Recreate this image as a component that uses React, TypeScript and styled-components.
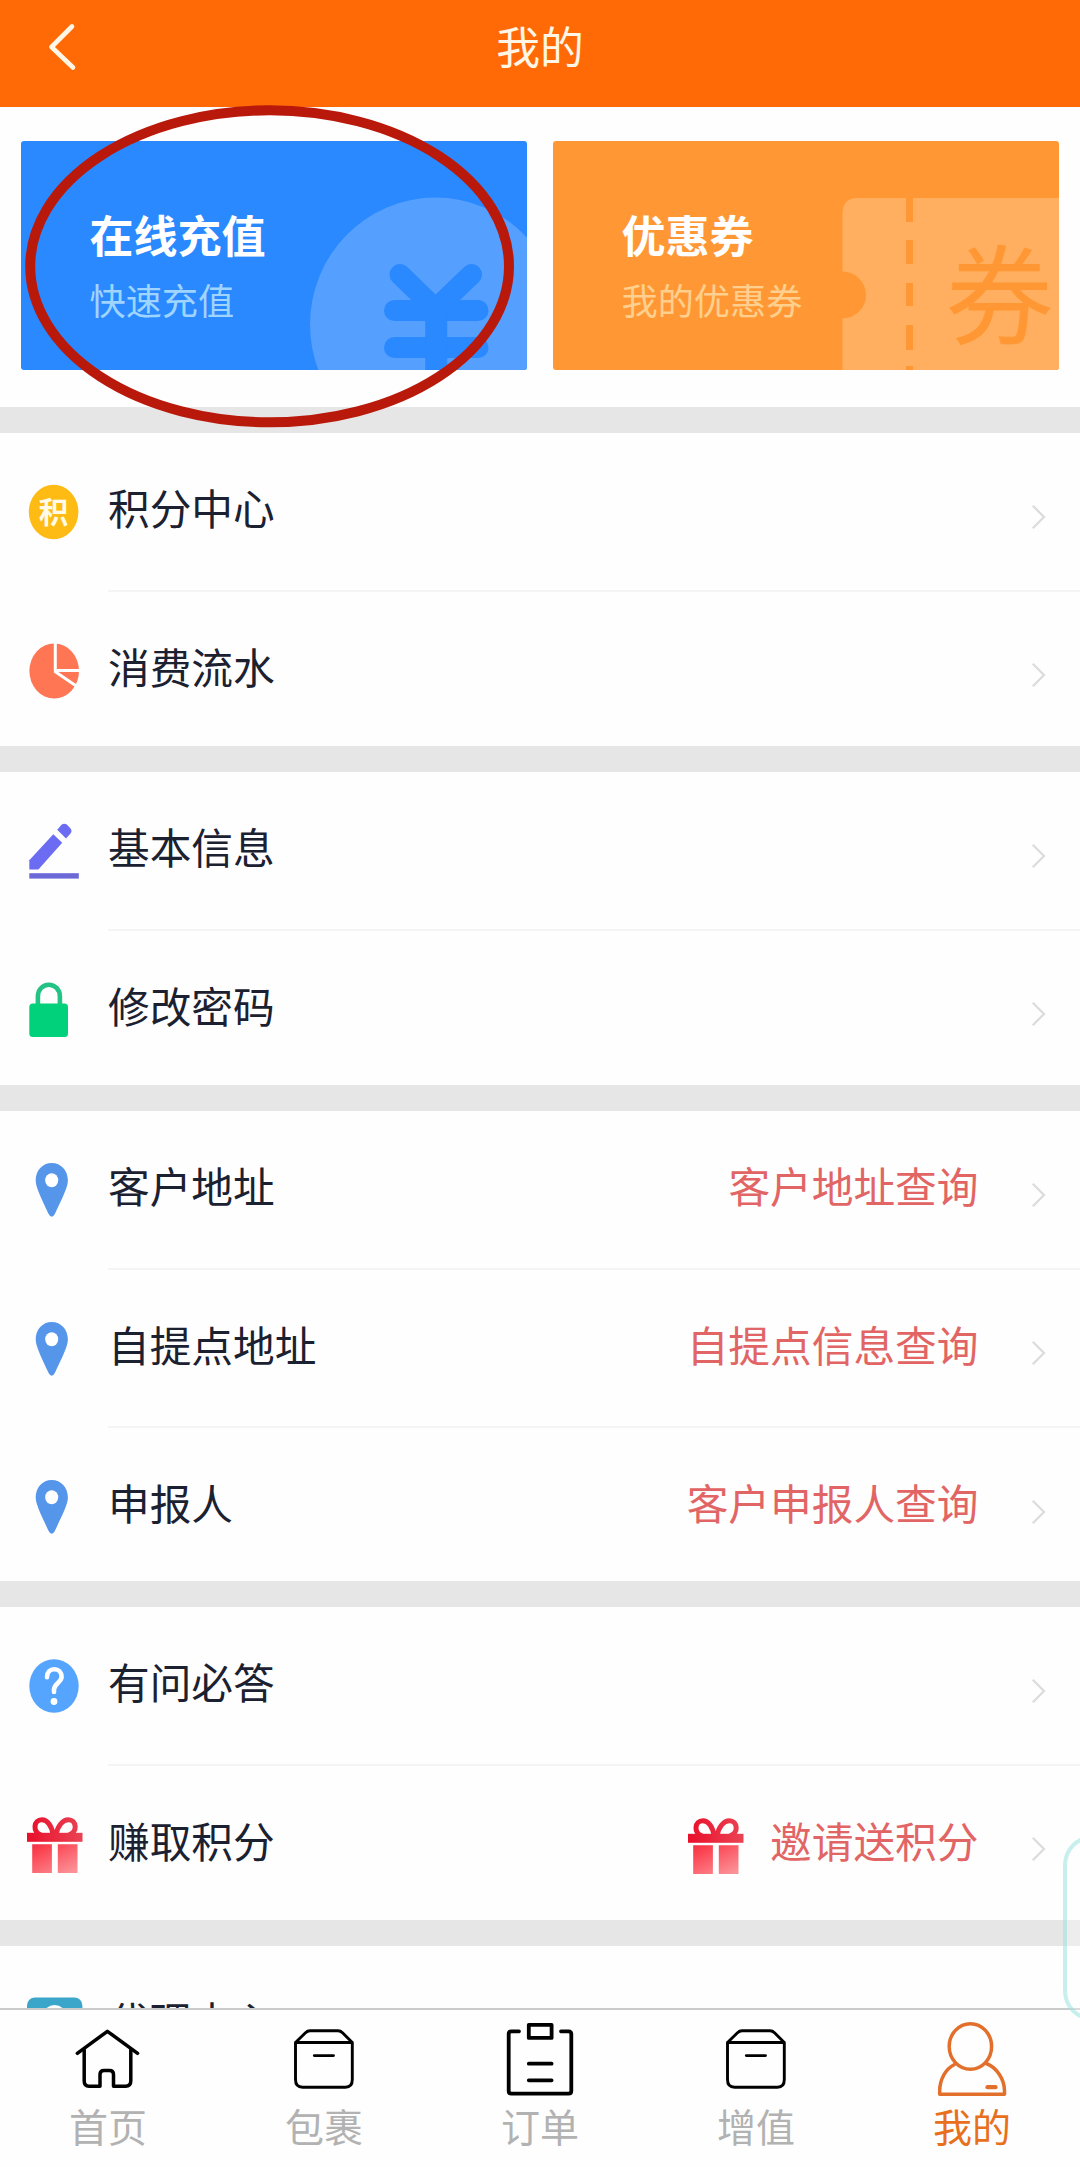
import React from "react";
import styled, { createGlobalStyle } from "styled-components";

const GlobalStyle = createGlobalStyle`
  *, *::before, *::after { box-sizing: border-box; }
  body {
    margin: 0;
    background: #fff;
    font-family: "Noto Sans CJK SC", "Noto Sans", sans-serif;
    overflow: hidden;
  }
  svg { display: block; flex: none; }
`;

const Screen = styled.div`
  position: relative;
  display: flex;
  flex-direction: column;
  width: 1080px;
  height: 2167px;
  overflow: hidden;
  background: #fefefe;
`;

const Header = styled.header`
  display: grid;
  grid-template-columns: 150px 1fr 150px;
  flex: none;
  height: 107px;
  background: #ff6a07;
  color: #fff6e6;
`;

const BackButton = styled.button`
  display: flex;
  align-items: flex-start;
  padding: 22px 0 0 45px;
  border: 0;
  background: none;
  color: inherit;
`;

const Title = styled.h1`
  margin: 0;
  font-size: 43.8px;
  font-weight: 400;
  line-height: 91px;
  text-align: center;
`;

const Content = styled.main`
  display: flex;
  flex-direction: column;
  flex: 1;
  min-height: 0;
  overflow: hidden;
`;

const Cards = styled.section`
  display: grid;
  grid-template-columns: 506px 506px;
  column-gap: 26px;
  flex: none;
  height: 300px;
  padding: 34px 0 37px 21px;
`;

const Card = styled.a<{ $color: string }>`
  position: relative;
  display: flex;
  flex-direction: column;
  overflow: hidden;
  padding: 63px 0 0 68.5px;
  border-radius: 3px;
  background: ${(p) => p.$color};
`;

const CardArt = styled.svg`
  position: absolute;
  right: 0;
  bottom: 0;
`;

const CardTitle = styled.strong`
  position: relative;
  color: #fff;
  font-size: 44px;
  font-weight: 700;
  line-height: 60px;
`;

const CardNote = styled.span<{ $color: string }>`
  position: relative;
  margin-top: 10px;
  color: ${(p) => p.$color};
  font-size: 36.2px;
  line-height: 50px;
`;

const Group = styled.section<{ $height: number }>`
  flex: none;
  height: ${(p) => p.$height}px;
  border-top: 26px solid #e6e6e6;
  overflow: hidden;
`;

const Row = styled.div`
  display: flex;
  align-items: flex-start;
  height: 158.6px;
  padding: 0 34px 0 27px;
  background: linear-gradient(#f4f4f4, #f4f4f4) no-repeat 108px 100% / 100% 2px;

  &:last-child {
    background: none;
  }
`;

const IconSlot = styled.span`
  flex: none;
  width: 56px;
  margin: 51px 25px 0 0;
`;

const Label = styled.span`
  flex: 1;
  margin-top: 44px;
  color: #1b2130;
  font-size: 41.7px;
  line-height: 60px;
`;

const Extra = styled.span`
  display: flex;
  gap: 26px;
  margin: 44px 52.5px 0 0;
  color: #e26565;
  font-size: 41.7px;
  line-height: 60px;

  svg {
    margin-top: 8px;
  }
`;

const ChevronSlot = styled.span`
  width: 15px;
  margin-top: 69.5px;
`;

const TabBar = styled.nav`
  display: grid;
  grid-template-columns: repeat(5, 1fr);
  flex: none;
  height: 159px;
  border-top: 2px solid #cbcbcb;
  background: #fefefe;
`;

const Tab = styled.a<{ $active?: boolean }>`
  display: flex;
  flex-direction: column;
  align-items: center;
  padding-top: 10px;
  color: ${(p) => (p.$active ? "#e8701c" : "#b2b2b2")};
  font-size: 39px;
  line-height: 56px;
`;

const TabLabel = styled.span`
  margin-top: -7px;
`;

const EdgeHandle = styled.div`
  position: absolute;
  left: 1063px;
  top: 1835px;
  width: 60px;
  height: 186px;
  border: 4px solid rgba(130, 220, 216, 0.45);
  border-radius: 30px;
  background: rgba(255, 255, 255, 0.3);
`;

const Highlight = styled.svg`
  position: absolute;
  left: 20px;
  top: 100px;
  pointer-events: none;
`;

const PointsIcon = () => (
  <svg width="56" height="56">
    <ellipse cx="26.6" cy="28" rx="24.8" ry="27.2" fill="#fdbb14" />
    <text x="26.4" y="38.500" textAnchor="middle" fontSize="29.500" fontWeight="700" fill="#fffbe8">
      积
    </text>
  </svg>
);

const PieIcon = () => (
  <svg width="56" height="56">
    <ellipse cx="27.2" cy="28" rx="24.8" ry="27.6" fill="#ff7655" />
    <path d="M28.3 0V28.2M27 27.4H54M27.6 28.2L50 43.4" fill="none" stroke="#fff" strokeWidth="3" />
  </svg>
);

const PencilIcon = () => (
  <svg width="56" height="56" fill="#6c6cf3">
    <path d="M2.3 37.2L26.3 11.2L35.2 19.8L11.4 46.6H2.3Z" />
    <path d="M30.2 6.8L34.6 1.800Q37 -.2 39.800 1.600L43.200 4.900Q45.600 8 43.500 10.600L39 15.400Z" />
    <rect x="2.3" y="50.2" width="49.5" height="5.4" fill="#6b69d6" />
  </svg>
);

const LockIcon = () => (
  <svg width="56" height="56">
    <path
      d="M10.9 24V14.5C10.9 7.5 15.8 2.7 21.8 2.7S32.900 7.5 32.900 14.5V24"
      fill="none"
      stroke="#22c384"
      strokeWidth="4.6"
    />
    <rect x="2.3" y="21.5" width="38.7" height="33.500" rx="3.5" fill="#00d17a" />
  </svg>
);

const PinIcon = () => (
  <svg width="56" height="56">
    <path
      d="M24.7 1C15.5 1 8.7 8.5 8.7 18.5C8.7 25.5 14.5 36.5 21.6 52Q24.7 57.5 27.8 52C35 36.5 40.9 25.5 40.9 18.5C40.9 8.5 34 1 24.7 1Z"
      fill="#5596ea"
    />
    <ellipse cx="24.7" cy="18.2" rx="6.5" ry="7" fill="#fff" />
  </svg>
);

const HelpIcon = () => (
  <svg width="56" height="56">
    <ellipse cx="27" cy="28" rx="24.7" ry="26.8" fill="#55a4fd" />
    <path
      d="M20 19.2C20 14 23 11.3 27.3 11.3S34.6 14.3 34.6 18.8C34.6 24.5 27 25.5 27 31.5V34"
      fill="none"
      stroke="#fff"
      strokeWidth="4.6"
      strokeLinecap="round"
    />
    <circle cx="27" cy="43.5" r="3.4" fill="#fff" />
  </svg>
);

const GiftIcon = ({ id }: { id: string }) => (
  <svg width="56" height="56">
    <defs>
      <linearGradient id={id} gradientUnits="userSpaceOnUse" x1="14" y1="4" x2="40" y2="58">
        <stop offset="0" stopColor="#e2122b" />
        <stop offset="0.45" stopColor="#fb4452" />
        <stop offset="1" stopColor="#fb9298" />
      </linearGradient>
      <linearGradient id={`${id}-lid`} gradientUnits="userSpaceOnUse" x1="0" y1="20" x2="56" y2="20">
        <stop offset="0" stopColor="#e90f2b" />
        <stop offset="1" stopColor="#ea4454" />
      </linearGradient>
    </defs>
    <path
      d="M14 18C9.500 16 7.800 12.500 8 9.500C8.300 5.500 11 2.800 14.800 2.800C20.500 2.800 24.800 9 26.200 18M42 18C46.500 16 48.400 12.500 48.200 9.500C47.900 5.500 45.200 2.800 41.400 2.800C35.700 2.800 30.500 9 29 18"
      fill="none"
      stroke={`url(#${id}-lid)`}
      strokeWidth="5"
    />
    <rect x="0" y="15.800" width="55.5" height="9" fill={`url(#${id}-lid)`} />
    <path d="M5.2 27.2H24.9V56H5.2ZM30.800 27.2H50.5V56H30.800Z" fill={`url(#${id})`} />
  </svg>
);

const AgentIcon = () => (
  <svg width="56" height="56">
    <rect x="0" y="0.5" width="55.4" height="55.4" rx="8" fill="#3ba6c9" />
    <ellipse cx="27.6" cy="20" rx="12" ry="12" fill="#fff" />
  </svg>
);

const Chevron = () => (
  <ChevronSlot>
    <svg width="15" height="28">
      <path d="M1.800 2.800L13 14L1.800 25.200" fill="none" stroke="#dcdcdc" strokeWidth="2.300" />
    </svg>
  </ChevronSlot>
);

const lineArt = {
  width: 80,
  height: 84,
  fill: "none",
  stroke: "#000",
  strokeLinecap: "round" as const,
  strokeLinejoin: "round" as const,
};

const HomeIcon = () => (
  <svg {...lineArt} strokeWidth="3.5">
    <path d="M9.3 33.3L39.4 11.3L69.6 33.3" />
    <path d="M16.2 29.5V61Q16.2 66.2 21 66.2H32V54.5Q32 50.5 36 50.5H41.5Q45.5 50.5 45.5 54.5V66.2H57.5Q62.8 66.2 62.8 61V29.5" />
  </svg>
);

const BoxIcon = () => (
  <svg {...lineArt} strokeWidth="2.9">
    <path d="M11.5 22.5L21.5 12.8Q23.5 10.8 26 10.8H54Q56.5 10.8 58.5 12.8L68.3 22.5V59.5Q68.3 67.2 61.5 67.2H18.5Q11.5 67.2 11.5 59.5ZM11.5 22.5H68.3M30.3 35.6H49.5" />
  </svg>
);

const OrderIcon = () => (
  <svg {...lineArt} strokeWidth="3.8">
    <path d="M19 11.3H11.5Q8.7 11.3 8.7 14.3V71Q8.7 73.7 11.5 73.7H68.5Q71.3 73.7 71.3 71V14.3Q71.3 11.3 68.5 11.3H61" />
    <path d="M28.8 4.8H51.6V17.9H28.8ZM28.8 43.7H51.6M28.8 60.3H51.6" />
  </svg>
);

const UserIcon = () => (
  <svg {...lineArt} stroke="#e2702c" strokeWidth="3.5">
    <ellipse cx="38.4" cy="26.5" rx="21.2" ry="22.8" />
    <path d="M22.5 44.5C13.5 49 7.7 59.5 7.7 71V74.3H72.5V71C72.5 59.5 65 47.5 54.3 43.5" />
    <path d="M55.5 67.2H63.5" strokeWidth="4.2" />
  </svg>
);

type Item = { label: string; icon: React.ReactNode; extra?: React.ReactNode };

const groups: { height: number; items: Item[] }[] = [
  {
    height: 339,
    items: [
      { label: "积分中心", icon: <PointsIcon /> },
      { label: "消费流水", icon: <PieIcon /> },
    ],
  },
  {
    height: 339,
    items: [
      { label: "基本信息", icon: <PencilIcon /> },
      { label: "修改密码", icon: <LockIcon /> },
    ],
  },
  {
    height: 496,
    items: [
      { label: "客户地址", icon: <PinIcon />, extra: "客户地址查询" },
      { label: "自提点地址", icon: <PinIcon />, extra: "自提点信息查询" },
      { label: "申报人", icon: <PinIcon />, extra: "客户申报人查询" },
    ],
  },
  {
    height: 339,
    items: [
      { label: "有问必答", icon: <HelpIcon /> },
      {
        label: "赚取积分",
        icon: <GiftIcon id="gift" />,
        extra: (
          <>
            <GiftIcon id="gift-invite" />
            邀请送积分
          </>
        ),
      },
    ],
  },
  { height: 184, items: [{ label: "代理中心", icon: <AgentIcon /> }] },
];

const tabs = [
  { label: "首页", icon: <HomeIcon /> },
  { label: "包裹", icon: <BoxIcon /> },
  { label: "订单", icon: <OrderIcon /> },
  { label: "增值", icon: <BoxIcon /> },
  { label: "我的", icon: <UserIcon />, active: true },
];

export default function App() {
  return (
    <Screen>
      <GlobalStyle />
      <Header>
        <BackButton aria-label="返回">
          <svg width="32" height="50">
            <path
              d="M27 4.5L6.5 25L28 45.5"
              fill="none"
              stroke="currentColor"
              strokeWidth="4.6"
              strokeLinecap="round"
              strokeLinejoin="round"
            />
          </svg>
        </BackButton>
        <Title>我的</Title>
      </Header>

      <Content>
        <Cards>
          <Card $color="#2a89ff">
            <CardArt width="230" height="180">
              <ellipse cx="138.5" cy="134.5" rx="125.5" ry="127" fill="#559fff" />
              <g stroke="#2a89ff" fill="none" strokeLinecap="round">
                <path d="M103 84.500L138.5 119L174.5 84.500" strokeWidth="21" />
                <path d="M97.5 120.5H181M97.5 157.500H181" strokeWidth="21" />
                <path d="M139.2 118V200" strokeWidth="22" />
              </g>
            </CardArt>
            <CardTitle>在线充值</CardTitle>
            <CardNote $color="#9fd4ff">快速充值</CardNote>
          </Card>
          <Card $color="#ff9834">
            <CardArt width="230" height="180">
              <path
                d="M13.5 180V128.500A23.500 23.500 0 0 0 13.5 81.500V24Q13.5 8 28 8H230V180Z"
                fill="#ffaf5f"
              />
              <path
                d="M80.500 8V32M80.500 50V74M80.500 93V116M80.500 135V160M80.500 176V180"
                stroke="#ff9834"
                strokeWidth="7"
              />
              <text x="170.5" y="146" textAnchor="middle" fontSize="108" fontWeight="400" fill="#ff9834">
                券
              </text>
            </CardArt>
            <CardTitle>优惠券</CardTitle>
            <CardNote $color="#ffcf8e">我的优惠券</CardNote>
          </Card>
        </Cards>

        {groups.map((group) => (
          <Group key={group.items[0].label} $height={group.height}>
            {group.items.map((item) => (
              <Row key={item.label}>
                <IconSlot>{item.icon}</IconSlot>
                <Label>{item.label}</Label>
                {item.extra && <Extra>{item.extra}</Extra>}
                <Chevron />
              </Row>
            ))}
          </Group>
        ))}
      </Content>

      <TabBar>
        {tabs.map((tab) => (
          <Tab key={tab.label} $active={tab.active}>
            {tab.icon}
            <TabLabel>{tab.label}</TabLabel>
          </Tab>
        ))}
      </TabBar>

      <EdgeHandle />
      <Highlight width="500" height="332">
        <ellipse cx="249.6" cy="166.3" rx="239.4" ry="156" fill="none" stroke="#b9190b" strokeWidth="10" />
      </Highlight>
    </Screen>
  );
}
